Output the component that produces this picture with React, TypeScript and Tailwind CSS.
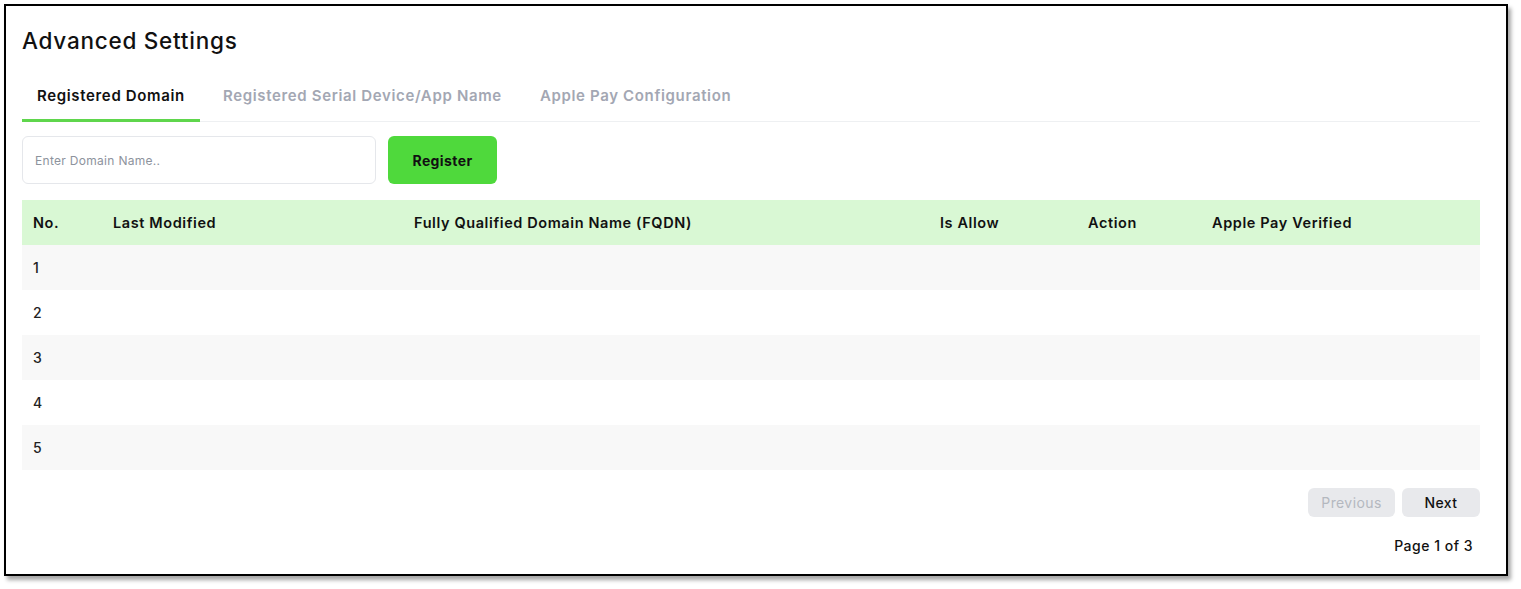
import { useState } from 'react'

const tabs = ['Registered Domain', 'Registered Serial Device/App Name', 'Apple Pay Configuration']

const columns = [
    { label: 'No.', width: 'w-[80px]' },
    { label: 'Last Modified', width: 'w-[301px]' },
    { label: 'Fully Qualified Domain Name (FQDN)', width: 'w-[526px]' },
    { label: 'Is Allow', width: 'w-[148px]' },
    { label: 'Action', width: 'w-[124px]' },
    { label: 'Apple Pay Verified', width: 'w-[279px]' },
]

const rows = [1, 2, 3, 4, 5]

export default function App() {
    const [activeTab, setActiveTab] = useState(0)
    const [domain, setDomain] = useState('')

    return (
        <div className="min-h-screen bg-white p-[4px] font-['Inter',sans-serif] text-[#111]">
            <div className="w-[1504px] h-[572px] border-2 border-black bg-white pl-[16px] pr-[26px] pt-[21px] shadow-[3px_4px_4px_rgba(0,0,0,0.35)]">
                <h1 className="text-[22.5px] leading-[28px] font-medium tracking-[0.75px]">Advanced Settings</h1>

                <div className="mt-[17px] flex gap-2 border-b border-[#eef0f2]">
                    {tabs.map((tab, i) => (
                        <button
                            key={tab}
                            onClick={() => setActiveTab(i)}
                            className={`px-[15px] pt-[13px] pb-[12px] text-[15px] leading-[22px] font-semibold tracking-[0.65px] -mb-px border-b-[3px] ${
                                activeTab === i ? 'border-[#5fd64c] text-[#111]' : 'border-transparent text-[#a3a7b3]'
                            }`}
                        >
                            {tab}
                        </button>
                    ))}
                </div>

                <div className="mt-[14px] flex gap-3">
                    <input
                        value={domain}
                        onChange={(e) => setDomain(e.target.value)}
                        placeholder="Enter Domain Name.."
                        className="w-[354px] h-[48px] rounded-md border border-[#e5e7eb] px-3 text-[12px] tracking-[0.3px] placeholder:text-[#8d939d] outline-none"
                    />
                    <button className="w-[109px] h-[48px] rounded-md bg-[#4fd93c] text-[14px] font-bold tracking-[0.4px] text-[#111]">
                        Register
                    </button>
                </div>

                <table className="mt-[16px] w-full table-fixed border-collapse text-left">
                    <thead>
                        <tr className="bg-[#d9f8d4] h-[45px]">
                            {columns.map((c) => (
                                <th key={c.label} className={`${c.width} px-[11px] text-[14.5px] font-semibold tracking-[0.6px]`}>
                                    {c.label}
                                </th>
                            ))}
                        </tr>
                    </thead>
                    <tbody>
                        {rows.map((r) => (
                            <tr key={r} className={`h-[45px] ${r % 2 === 1 ? 'bg-[#f8f8f8]' : 'bg-white'}`}>
                                <td className="px-[11px] text-[14px] font-medium text-[#222]">{r}</td>
                                <td />
                                <td />
                                <td />
                                <td />
                                <td />
                            </tr>
                        ))}
                    </tbody>
                </table>

                <div className="mt-[18px] flex justify-end gap-[7px]">
                    <button disabled className="w-[87px] h-[29px] rounded-md bg-[#e8e9ec] text-[14px] tracking-[0.4px] text-[#b4b8bf]">
                        Previous
                    </button>
                    <button className="w-[78px] h-[29px] rounded-md bg-[#e8e9ec] text-[14px] font-medium tracking-[0.4px] text-[#111]">
                        Next
                    </button>
                </div>

                <div className="mt-[18px] flex justify-end pr-[7px] text-[14px] font-medium tracking-[0.5px] text-[#111]">
                    Page 1 of 3
                </div>
            </div>
        </div>
    )
}
